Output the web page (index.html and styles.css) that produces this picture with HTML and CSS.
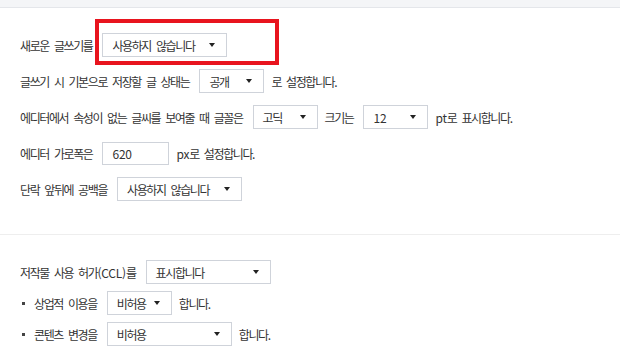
FILE: index.html
```html
<!DOCTYPE html>
<html lang="ko">
<head>
  <meta charset="UTF-8" />
  <meta name="viewport" content="width=device-width, initial-scale=1.0"/>
  <title>글쓰기 설정</title>
  <link rel="stylesheet" href="styles.css">
</head>
<body>

<!-- Top bar -->
<div class="topbar"></div>

<!-- Editor settings -->
<div class="section section-editor">
  <div class="row">
    <span class="label">새로운 글쓰기를</span>
    <div class="select w-wide"><span>사용하지 않습니다</span><i class="arrow"></i></div>
    <div class="highlight"></div>
  </div>

  <div class="row">
    <span class="label">글쓰기 시 기본으로 저장할 글 상태는</span>
    <div class="select w-small"><span>공개</span><i class="arrow"></i></div>
    <span>로 설정합니다.</span>
  </div>

  <div class="row">
    <span class="label">에디터에서 속성이 없는 글씨를 보여줄 때 글꼴은</span>
    <div class="select w-small"><span>고딕</span><i class="arrow"></i></div>
    <span class="label">크기는</span>
    <div class="select w-small"><span class="latin">12</span><i class="arrow"></i></div>
    <span><span class="latin">pt</span>로 표시합니다.</span>
  </div>

  <div class="row">
    <span class="label">에디터 가로폭은</span>
    <input class="input-box" value="620" />
    <span><span class="latin">px</span>로 설정합니다.</span>
  </div>

  <div class="row">
    <span class="label">단락 앞뒤에 공백을</span>
    <div class="select w-wide"><span>사용하지 않습니다</span><i class="arrow"></i></div>
  </div>
</div>

<!-- CCL settings -->
<div class="section section-ccl">
  <div class="row">
    <span class="label">저작물 사용 허가<span class="latin">(CCL)</span>를</span>
    <div class="select w-wide"><span>표시합니다</span><i class="arrow"></i></div>
  </div>

  <div class="row sub">
    <span class="bullet"></span>
    <span class="label">상업적 이용을</span>
    <div class="select w-small"><span>비허용</span><i class="arrow"></i></div>
    <span>합니다.</span>
  </div>

  <div class="row sub">
    <span class="bullet"></span>
    <span class="label">콘텐츠 변경을</span>
    <div class="select w-wide"><span>비허용</span><i class="arrow"></i></div>
    <span>합니다.</span>
  </div>
</div>

</body>
</html>
```

FILE: styles.css
```css
body {
  margin: 0;
  font-family: "Noto Sans CJK KR", "Noto Sans", sans-serif;
  font-size: 12px;
  letter-spacing: -1.4px;
  word-spacing: 3px;
  color: #333;
  background-color: #fff;
}

.topbar {
  height: 7px;
  background-color: #f4f5f7;
  border-bottom: 1px solid #e4e6ea;
}

.section { padding: 25px 20px 33px; border-bottom: 1px solid #eeeeee; }
.section-ccl { border-bottom: none; padding-bottom: 0; }

.row {
  position: relative;
  display: flex;
  align-items: center;
  gap: 7px;
  height: 24px;
  margin-bottom: 12px;
  white-space: nowrap;
}

.row:last-child { margin-bottom: 0; }
.section-ccl .row { margin-bottom: 7px; }
.section-ccl .row:last-child { margin-bottom: 0; }

.label { margin-right: 3px; }
.latin { letter-spacing: -0.2px; }

.select {
  box-sizing: border-box;
  height: 24px;
  display: flex;
  align-items: center;
  justify-content: space-between;
  padding: 0 11px 0 9px;
  border: 1px solid #cfd3da;
  background-color: #fff;
  color: #333;
}

.w-wide { width: 125px; }
.w-small { width: 65px; }

.arrow {
  width: 0;
  height: 0;
  border-left: 3px solid transparent;
  border-right: 3px solid transparent;
  border-top: 4px solid #222;
}

.input-box {
  box-sizing: border-box;
  width: 67px;
  height: 23px;
  padding: 0 9px;
  border: 1px solid #cfd3da;
  font: inherit;
  letter-spacing: -0.2px;
  color: #333;
}

.bullet {
  width: 3px;
  height: 3px;
  margin: 0 2px 0 2px;
  background-color: #444;
}

.highlight {
  position: absolute;
  left: 75px;
  top: -14px;
  width: 184px;
  height: 46px;
  box-sizing: border-box;
  border: 4px solid #e8141e;
}
```
